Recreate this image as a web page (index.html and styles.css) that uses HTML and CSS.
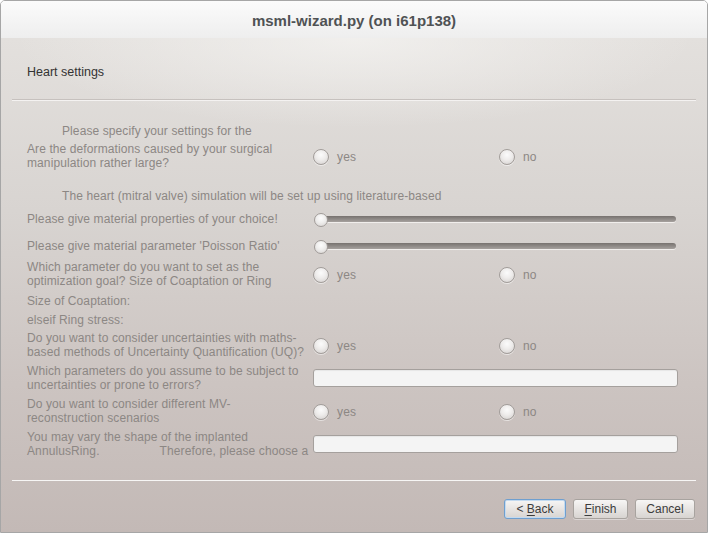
FILE: index.html
```html
<!DOCTYPE html>
<html>
<head>
<meta charset="utf-8">
<link rel="stylesheet" href="styles.css">
</head>
<body>
<div class="window">
  <div class="titlebar">msml-wizard.py (on i61p138)</div>
  <div class="client">
    <div class="page-title">Heart settings</div>
    <div class="sep sep-top"></div>
    <div class="form">
      <div class="row single">
        <div class="label intro">Please specify your settings for the</div>
      </div>
      <div class="row mt-4">
        <div class="label">Are the deformations caused by your surgical<br>manipulation rather large?</div>
        <div class="radio"><span class="dot"></span>yes</div>
        <div class="radio"><span class="dot"></span>no</div>
      </div>
      <div class="row single mt-19">
        <div class="label intro">The heart (mitral valve) simulation will be set up using literature-based</div>
      </div>
      <div class="row single mt-8">
        <div class="label">Please give material properties of your choice!</div>
        <div class="slider"><span class="track"></span><span class="thumb"></span></div>
      </div>
      <div class="row single mt-13">
        <div class="label">Please give material parameter 'Poisson Ratio'</div>
        <div class="slider"><span class="track"></span><span class="thumb"></span></div>
      </div>
      <div class="row mt-8">
        <div class="label">Which parameter do you want to set as the<br>optimization goal? Size of Coaptation or Ring</div>
        <div class="radio"><span class="dot"></span>yes</div>
        <div class="radio"><span class="dot"></span>no</div>
      </div>
      <div class="row single mt-6">
        <div class="label">Size of Coaptation:</div>
      </div>
      <div class="row single mt-5">
        <div class="label">elseif Ring stress:</div>
      </div>
      <div class="row mt-4">
        <div class="label">Do you want to consider uncertainties with maths-<br>based methods of Uncertainty Quantification (UQ)?</div>
        <div class="radio"><span class="dot"></span>yes</div>
        <div class="radio"><span class="dot"></span>no</div>
      </div>
      <div class="row mt-5">
        <div class="label">Which parameters do you assume to be subject to<br>uncertainties or prone to errors?</div>
        <div class="field"></div>
      </div>
      <div class="row mt-5">
        <div class="label">Do you want to consider different MV-<br>reconstruction scenarios</div>
        <div class="radio"><span class="dot"></span>yes</div>
        <div class="radio"><span class="dot"></span>no</div>
      </div>
      <div class="row mt-5">
        <div class="label">You may vary the shape of the implanted<br>AnnulusRing.<span class="indent">Therefore, please choose a</span></div>
        <div class="field"></div>
      </div>
    </div>
    <div class="footer">
      <div class="sep"></div>
      <div class="buttons">
        <button class="btn btn-back focused">&lt; <u>B</u>ack</button>
        <button class="btn btn-finish"><u>F</u>inish</button>
        <button class="btn btn-cancel">Cancel</button>
      </div>
    </div>
  </div>
</div>
</body>
</html>
```

FILE: styles.css
```css
* { box-sizing: border-box; }
html, body { margin: 0; padding: 0; }
body {
  width: 708px;
  height: 533px;
  background: #ffffff;
  font-family: "Liberation Sans", Arial, sans-serif;
  overflow: hidden;
}
.window {
  width: 708px;
  height: 533px;
  border: 1px solid #a6a6a6;
  border-radius: 5px 5px 0 0;
  overflow: hidden;
  display: flex;
  flex-direction: column;
}
.titlebar {
  height: 37px;
  flex: none;
  display: flex;
  align-items: center;
  justify-content: center;
  background: linear-gradient(#fbfbfb, #eeeeee);
  color: #4f5254;
  font-size: 15px;
  font-weight: bold;
  padding-top: 1px;
}
.client {
  flex: 1;
  display: flex;
  flex-direction: column;
  background:
    radial-gradient(ellipse 340px 90px at 50% 0, rgba(245,244,242,0.75), rgba(245,244,242,0)),
    linear-gradient(#e3e0dd 0%, #d8d4d1 35%, #ccc4c1 70%, #c3b9b6 100%);
}
.page-title {
  height: 61px;
  padding: 27px 0 0 26px;
  font-size: 12.5px;
  line-height: 14px;
  color: #333333;
  flex: none;
}
.sep {
  height: 1px;
  margin: 0 11px 0 11px;
  background: #f7f6f5;
  flex: none;
}
.sep-top {
  height: 2px;
  border-top: 1px solid #c6c1be;
  background: #f4f2f1;
}
.form {
  flex: 1;
  padding: 23px 0 0 26px;
  display: flex;
  flex-direction: column;
}
.row {
  display: grid;
  grid-template-columns: 286px 186px 179px;
  align-items: center;
  height: 28px;
  flex: none;
}
.row.single { height: 14px; }
.mt-4 { margin-top: 4px; }
.mt-5 { margin-top: 5px; }
.mt-6 { margin-top: 6px; }
.mt-8 { margin-top: 8px; }
.mt-13 { margin-top: 13px; }
.mt-19 { margin-top: 19px; }
.label {
  font-size: 12px;
  letter-spacing: 0.1px;
  line-height: 14px;
  color: #8c8784;
  white-space: nowrap;
}
.label.intro {
  grid-column: 1 / -1;
  padding-left: 35px;
}
.indent { margin-left: 60px; }
.radio {
  display: flex;
  align-items: center;
  gap: 8px;
  font-size: 12px;
  color: #8c8784;
  letter-spacing: 0.2px;
  margin-top: 1px;
}
.dot {
  width: 16px;
  height: 16px;
  border-radius: 50%;
  border: 1px solid #a29d9a;
  background: radial-gradient(circle at 50% 35%, #fbfbfb 0%, #eeeceb 45%, #d2cecc 100%);
  box-shadow: 0 1px 0 rgba(255,255,255,0.5);
  flex: none;
}
.slider {
  grid-column: 2 / 4;
  position: relative;
  height: 14px;
  display: flex;
  align-items: center;
  margin-top: 2px;
}
.track {
  display: block;
  width: 361px;
  height: 6px;
  margin-left: 2px;
  margin-top: -2px;
  border-radius: 3px;
  background: linear-gradient(#77726f, #8e8986 50%, #a6a19e);
  box-shadow: 0 1px 0 #f1eeec;
}
.thumb {
  position: absolute;
  left: 1px;
  top: 0;
  width: 14px;
  height: 14px;
  border-radius: 50%;
  border: 1px solid #a19c99;
  background: radial-gradient(circle at 50% 35%, #fdfdfd 0%, #efeeed 45%, #d6d2d0 100%);
}
.field {
  grid-column: 2 / 4;
  height: 18px;
  width: 365px;
  border: 1px solid #a5a09d;
  border-radius: 3px;
  background: #f4f4f4;
  box-shadow: inset 0 1px 1px rgba(0,0,0,0.06);
}
.footer {
  height: 52px;
  flex: none;
  display: flex;
  flex-direction: column;
}
.buttons {
  display: flex;
  justify-content: flex-end;
  gap: 7px;
  margin-top: 18px;
  padding-right: 12px;
}
.btn {
  height: 20px;
  padding: 0;
  font-family: "Liberation Sans", Arial, sans-serif;
  font-size: 12px;
  color: #3c3c3c;
  border: 1px solid #a8a39f;
  border-radius: 3px;
  background: linear-gradient(#f7f6f5, #e4e1df 60%, #d8d4d1);
  box-shadow: 0 1px 0 rgba(255,255,255,0.4);
}
.btn u { text-decoration-thickness: 1px; text-underline-offset: 2px; }
.btn-back { width: 62px; }
.btn-finish { width: 55px; }
.btn-cancel { width: 60px; }
.btn.focused {
  border-color: #6f9fcf;
  box-shadow: inset 0 0 0 1px #c3daf0;
}
```
